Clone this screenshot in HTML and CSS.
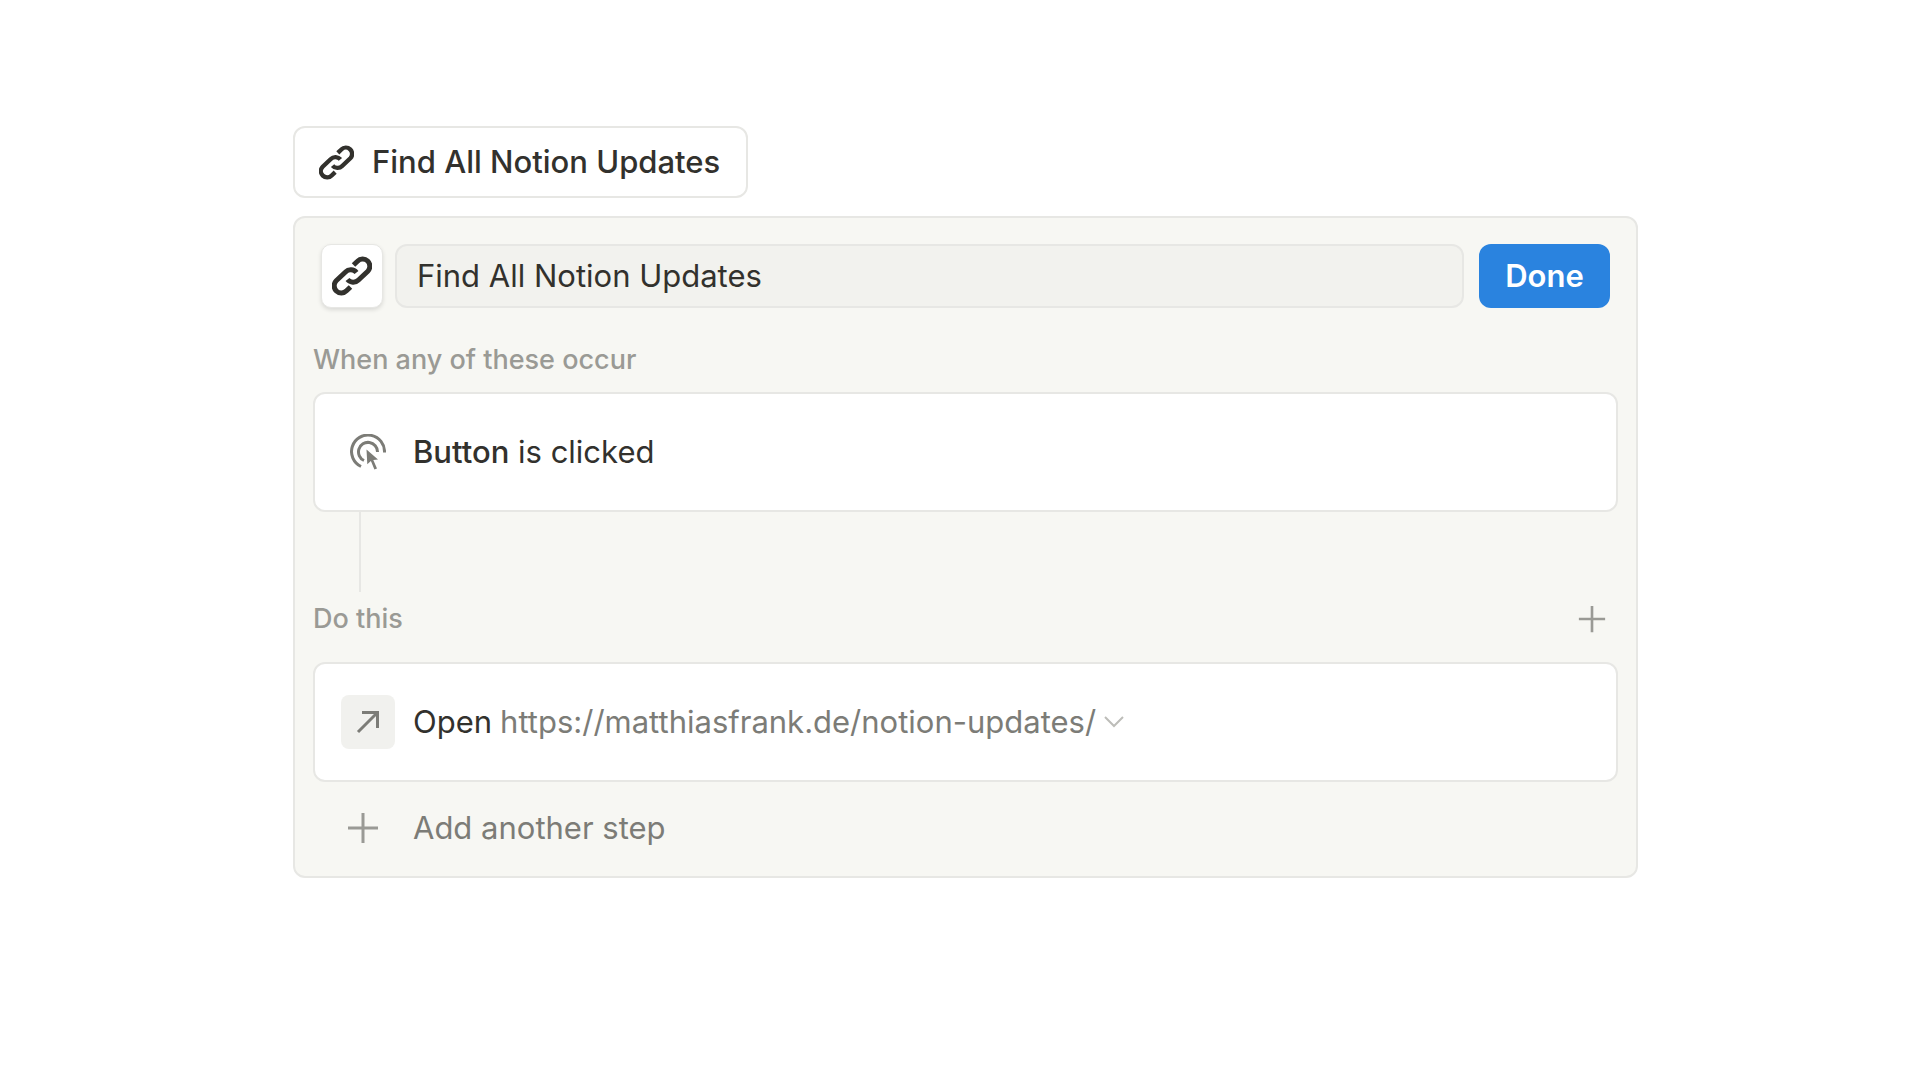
FILE: index.html
```html
<!DOCTYPE html>
<html lang="en">
<head>
  <meta charset="UTF-8">
  <title>Find All Notion Updates</title>
  <link rel="stylesheet" href="styles.css">
</head>
<body>
  <svg class="sprite" aria-hidden="true">
    <symbol id="link" viewBox="0 0 40 40">
      <path d="M21.500 9l4-3.800a7 7 0 0 1 10.300 10L26.500 24a7.400 7.400 0 0 1-11-.5M18.500 31l-4 3.800a7 7 0 0 1-10.300-10L13.500 16a7.400 7.400 0 0 1 11 .5"/>
    </symbol>
    <symbol id="plus" viewBox="0 0 32 32">
      <path d="M16 1v30M1 16h30"/>
    </symbol>
  </svg>

  <main>
    <button class="trigger" type="button">
      <svg class="icon-link"><use href="#link"/></svg>
      Find All Notion Updates
    </button>

    <section class="panel">
      <div class="header">
        <button class="icon-button" type="button" aria-label="Change icon">
          <svg class="icon-link"><use href="#link"/></svg>
        </button>
        <input class="name" type="text" value="Find All Notion Updates" aria-label="Button name">
        <button class="done" type="button">Done</button>
      </div>

      <h2>When any of these occur</h2>
      <div class="card">
        <span class="step-icon">
          <svg class="icon-click" viewBox="0 0 36 36">
            <path class="arc" d="M11 32.500A16.500 16.500 0 1 1 34.500 18.500M14 26.500A9.500 9.500 0 1 1 27.500 18"/>
            <path class="cursor" d="M16.500 15.500l11.500 10-4.700.6 3.700 8.400-2.600 1.100-3.500-8.500-3.600 3.200z"/>
          </svg>
        </span>
        <p><strong>Button</strong> is clicked</p>
      </div>

      <div class="connector"></div>

      <div class="section-row">
        <h2>Do this</h2>
        <button class="add" type="button" aria-label="Add action">
          <svg class="icon-plus"><use href="#plus"/></svg>
        </button>
      </div>
      <div class="card">
        <span class="step-icon tile">
          <svg class="icon-arrow" viewBox="0 0 24 24">
            <path d="M2 22L21 3M6 2.500h15.500V18"/>
          </svg>
        </span>
        <p>Open</p>
        <button class="url" type="button">
          https://matthiasfrank.de/notion-updates/
          <svg class="icon-chevron" viewBox="0 0 20 12">
            <path d="M1 1l9 9 9-9"/>
          </svg>
        </button>
      </div>

      <button class="add-step" type="button">
        <svg class="icon-plus large"><use href="#plus"/></svg>
        Add another step
      </button>
    </section>
  </main>
</body>
</html>
```
FILE: styles.css
```css
:root {
  --text: #32312d;
  --muted: #7c7c77;
  --label: #9a9a95;
  --border: #e7e7e4;
  --panel: #f7f7f3;
  --blue: #2a83df;
}
* {
  box-sizing: border-box;
}
body {
  margin: 0;
  background: #fff;
  color: var(--text);
  font-family: Inter, "Liberation Sans", sans-serif;
  font-size: 31px;
  line-height: 40px;
}
main {
  padding: 126px 282px 40px 293px;
}
button, input {
  font: inherit;
  color: inherit;
  margin: 0;
}
button {
  display: flex;
  align-items: center;
  padding: 0;
  border: none;
  background: none;
  cursor: pointer;
}
svg {
  display: block;
  flex: none;
  fill: none;
  stroke: currentColor;
}
.sprite {
  position: absolute;
  width: 0;
  height: 0;
}
h2, p {
  margin: 0;
}
h2 {
  color: var(--label);
  font-size: 27px;
  font-weight: 500;
  line-height: 40px;
}
strong {
  font-weight: 500;
}

.trigger {
  gap: 18px;
  height: 72px;
  padding: 0 26px 0 24px;
  border: 2px solid var(--border);
  border-radius: 12px;
  background: #fff;
  font-weight: 500;
}
.panel {
  margin-top: 18px;
  padding: 26px 18px 28px;
  border: 2px solid var(--border);
  border-radius: 12px;
  background: var(--panel);
}
.header {
  display: flex;
  gap: 12px;
  height: 64px;
  margin: 0 8px 32px;
}
.icon-button {
  justify-content: center;
  width: 62px;
  border: 1px solid var(--border);
  border-radius: 10px;
  background: #fff;
  box-shadow: 0 2px 4px rgba(0, 0, 0, 0.12);
}
.name {
  flex: 1;
  min-width: 0;
  padding: 0 20px;
  border: 2px solid var(--border);
  border-radius: 12px;
  background: #f2f2ee;
}
.done {
  justify-content: center;
  width: 131px;
  margin-left: 3px;
  border-radius: 12px;
  background: var(--blue);
  color: #fff;
  font-weight: 600;
}

.card {
  display: flex;
  align-items: center;
  height: 120px;
  margin-top: 12px;
  padding: 0 26px;
  border: 2px solid var(--border);
  border-radius: 12px;
  background: #fff;
}
.step-icon {
  display: flex;
  align-items: center;
  justify-content: center;
  width: 54px;
  height: 54px;
  margin-right: 18px;
  border-radius: 8px;
  color: var(--muted);
}
.tile {
  background: #f1f1ee;
}
.connector {
  width: 2px;
  height: 80px;
  margin-left: 46px;
  background: var(--border);
}
.section-row {
  display: flex;
  align-items: center;
  justify-content: space-between;
  padding: 7px 12px 11px 0;
}
.add {
  color: var(--label);
}
.url {
  gap: 8px;
  margin-left: 8px;
  color: var(--muted);
}
.add-step {
  gap: 34px;
  margin: 26px 0 0 34px;
  color: var(--muted);
}

.icon-link {
  width: 35px;
  height: 35px;
  stroke-width: 5;
}
.icon-button .icon-link {
  width: 40px;
  height: 40px;
}
.icon-click {
  width: 36px;
  height: 36px;
}
.arc {
  stroke-width: 3;
}
.cursor {
  fill: currentColor;
  stroke: none;
}
.icon-arrow {
  width: 24px;
  height: 24px;
  stroke-width: 3;
}
.icon-chevron {
  width: 20px;
  height: 12px;
  color: #bdbdb9;
  stroke-width: 2;
}
.icon-plus {
  width: 28px;
  height: 28px;
  stroke-width: 3;
}
.icon-plus.large {
  width: 32px;
  height: 32px;
}
.add-step .icon-plus {
  color: var(--label);
}
```
